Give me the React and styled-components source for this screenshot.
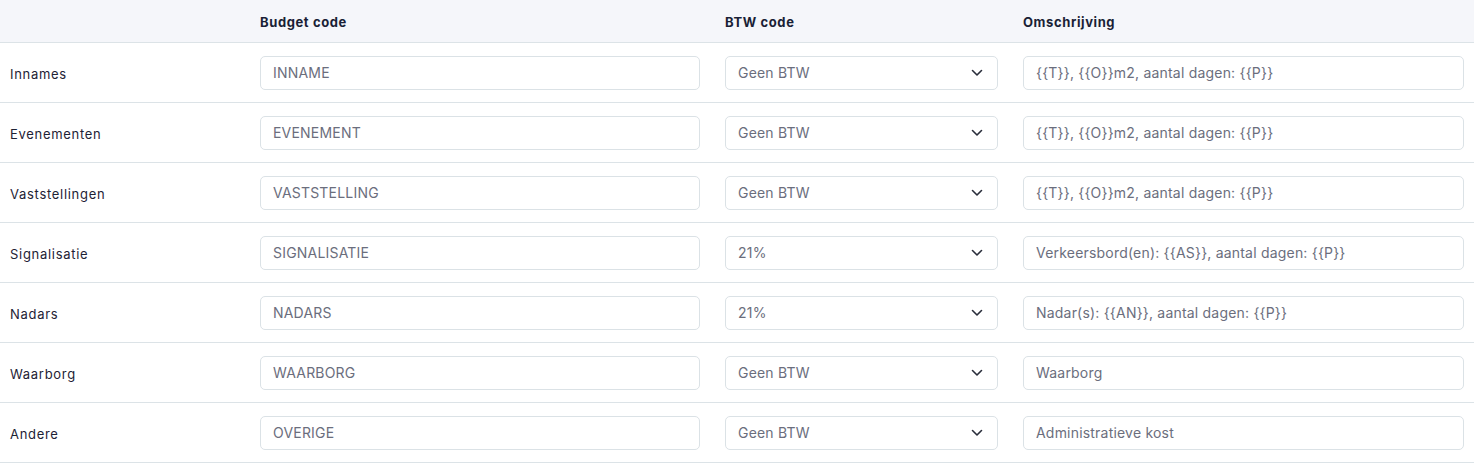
import React from 'react';
import styled, { createGlobalStyle } from 'styled-components';

const GlobalStyle = createGlobalStyle`
  body {
    margin: 0;
    background: #ffffff;
    font-family: 'Inter', 'Noto Sans', sans-serif;
  }
`;

const Table = styled.div`
  width: 1474px;
`;

const Row = styled.div`
  display: grid;
  grid-template-columns: 250px 465px 298px 1fr;
  align-items: center;
  height: ${(p) => (p.$header ? '42px' : '59px')};
  background: ${(p) => (p.$header ? '#f5f6fa' : '#ffffff')};
  border-bottom: 1px solid #dce3e7;
`;

const Cell = styled.div`
  padding: 0 ${(p) => (p.$last ? '10px' : '15px')} 0 10px;
  min-width: 0;
`;

const HeadText = styled.span`
  font-size: 13px;
  font-weight: 700;
  letter-spacing: 0.6px;
  color: #1a1f36;
`;

const Label = styled.span`
  font-size: 13px;
  letter-spacing: 0.7px;
  color: #1e2235;
`;

const Input = styled.input`
  box-sizing: border-box;
  width: 100%;
  height: 34px;
  padding: 0 12px;
  border: 1px solid #dbe2e6;
  border-radius: 5px;
  font-family: inherit;
  font-size: 14px;
  letter-spacing: 0.2px;
  color: #6b6e7d;
  background: #fff;
  outline: none;
`;

const SelectBox = styled.div`
  box-sizing: border-box;
  display: flex;
  align-items: center;
  justify-content: space-between;
  height: 34px;
  padding: 0 14px 0 12px;
  border: 1px solid #dbe2e6;
  border-radius: 5px;
  font-size: 14px;
  letter-spacing: 0.2px;
  color: #6b6e7d;
`;

const Chevron = () => (
  <svg width="12" height="8" viewBox="0 0 12 8" fill="none">
    <path d="M1.5 1.5L6 6L10.5 1.5" stroke="#2a2e3b" strokeWidth="1.6" strokeLinecap="round" strokeLinejoin="round" />
  </svg>
);

const rows = [
  ['Innames', 'INNAME', 'Geen BTW', '{{T}}, {{O}}m2, aantal dagen: {{P}}'],
  ['Evenementen', 'EVENEMENT', 'Geen BTW', '{{T}}, {{O}}m2, aantal dagen: {{P}}'],
  ['Vaststellingen', 'VASTSTELLING', 'Geen BTW', '{{T}}, {{O}}m2, aantal dagen: {{P}}'],
  ['Signalisatie', 'SIGNALISATIE', '21%', 'Verkeersbord(en): {{AS}}, aantal dagen: {{P}}'],
  ['Nadars', 'NADARS', '21%', 'Nadar(s): {{AN}}, aantal dagen: {{P}}'],
  ['Waarborg', 'WAARBORG', 'Geen BTW', 'Waarborg'],
  ['Andere', 'OVERIGE', 'Geen BTW', 'Administratieve kost'],
];

export default function App() {
  return (
    <>
      <GlobalStyle />
      <Table>
        <Row $header>
          <Cell />
          <Cell><HeadText>Budget code</HeadText></Cell>
          <Cell><HeadText>BTW code</HeadText></Cell>
          <Cell $last><HeadText>Omschrijving</HeadText></Cell>
        </Row>
        {rows.map(([label, code, btw, desc]) => (
          <Row key={label}>
            <Cell><Label>{label}</Label></Cell>
            <Cell><Input defaultValue={code} /></Cell>
            <Cell>
              <SelectBox>
                <span>{btw}</span>
                <Chevron />
              </SelectBox>
            </Cell>
            <Cell $last><Input defaultValue={desc} /></Cell>
          </Row>
        ))}
      </Table>
    </>
  );
}
